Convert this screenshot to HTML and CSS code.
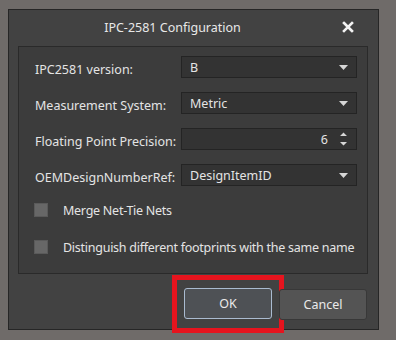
FILE: index.html
```
<!DOCTYPE html>
<html>
<head>
<meta charset="utf-8">
<link rel="stylesheet" href="styles.css">
</head>
<body>
<div class="dialog">
  <div class="titlebar">
    <span class="title">IPC-2581 Configuration</span>
    <svg class="close" width="12" height="12" viewBox="0 0 12 12"><path d="M2 2 L10 10 M10 2 L2 10" stroke="#f2f2f2" stroke-width="2.6" stroke-linecap="square"/></svg>
  </div>
  <div class="group">
    <div class="row">
      <span class="label">IPC2581 version:</span>
      <div class="field combo"><span>B</span><svg class="arrow" width="9" height="5" viewBox="0 0 9 5"><path d="M0 0 H9 L4.5 5 Z" fill="#d6d6d6"/></svg></div>
    </div>
    <div class="row">
      <span class="label">Measurement System:</span>
      <div class="field combo"><span>Metric</span><svg class="arrow" width="9" height="5" viewBox="0 0 9 5"><path d="M0 0 H9 L4.5 5 Z" fill="#d6d6d6"/></svg></div>
    </div>
    <div class="row">
      <span class="label">Floating Point Precision:</span>
      <div class="field spin"><span class="num">6</span><svg class="spinarrows" width="9" height="14" viewBox="0 0 9 14"><path d="M1 4 L4.5 0.5 L8 4 Z M1 10 L4.5 13.5 L8 10 Z" fill="#d6d6d6"/></svg></div>
    </div>
    <div class="row">
      <span class="label">OEMDesignNumberRef:</span>
      <div class="field combo"><span>DesignItemID</span><svg class="arrow" width="9" height="5" viewBox="0 0 9 5"><path d="M0 0 H9 L4.5 5 Z" fill="#d6d6d6"/></svg></div>
    </div>
    <div class="check first"><span class="box"></span><span class="ctext">Merge Net-Tie Nets</span></div>
    <div class="check"><span class="box"></span><span class="ctext">Distinguish different footprints with the same name</span></div>
  </div>
  <div class="buttons">
    <div class="okwrap"><button class="btn ok">OK</button></div>
    <button class="btn cancel">Cancel</button>
  </div>
</div>
</body>
</html>
```
FILE: styles.css
```
html, body {
  margin: 0;
  padding: 0;
  background: #6f6b69;
  width: 396px;
  height: 340px;
  overflow: hidden;
  font-family: "Noto Sans", "Open Sans", sans-serif;
  font-size: 12px;
  color: #e4e4e4;
}
.dialog {
  margin: 9px 0 0 8px;
  width: 369px;
  height: 319px;
  background: #424242;
  border: 1px solid #262626;
  display: flex;
  flex-direction: column;
}
.titlebar {
  height: 36px;
  flex: none;
  position: relative;
  display: flex;
  align-items: center;
  justify-content: center;
  padding-right: 42px;
}
.title {
  font-size: 12.5px;
  color: #e8e8e8;
  margin-top: -1px;
}
.close {
  position: absolute;
  right: 24px;
  top: 11px;
}
.group {
  margin: 0 10px 0 9px;
  height: 228px;
  flex: none;
  background: #3c3c3c;
  border: 1px solid #2a2a2a;
  padding: 9px 9px 0 16px;
  box-sizing: border-box;
  display: flex;
  flex-direction: column;
}
.row {
  display: flex;
  align-items: center;
  height: 22px;
  margin-bottom: 14px;
}
.label {
  width: 146px;
  font-size: 12.5px;
  padding-top: 4px;
  white-space: nowrap;
}
.field {
  width: 176px;
  height: 22px;
  box-sizing: border-box;
  background: #333333;
  border: 1px solid #242424;
  display: flex;
  align-items: center;
  font-size: 12.5px;
  position: relative;
}
.combo {
  padding-left: 8px;
}
.arrow {
  position: absolute;
  right: 8px;
  top: 8px;
}
.spin {
  justify-content: flex-end;
  padding-right: 28px;
}
.spinarrows {
  position: absolute;
  right: 8px;
  top: 3px;
}
.check {
  display: flex;
  align-items: center;
  height: 16px;
  font-size: 12.5px;
  margin-left: -1px;
}
.ctext {
  white-space: nowrap;
  letter-spacing: -0.26px;
}
.check.first {
  margin-top: 2px;
  margin-bottom: 21px;
}
.box {
  width: 14px;
  height: 14px;
  background: #676767;
  border: 1px solid #5a5a5a;
  box-sizing: border-box;
  margin-right: 15px;
  flex: none;
}
.buttons {
  flex: none;
  display: flex;
  justify-content: flex-end;
  align-items: center;
  padding-right: 11px;
  margin-top: 1px;
}
.okwrap {
  border: 5px solid #e6141e;
  padding: 8px 7px 9px 7px;
  margin-right: -5px;
}
.btn {
  font-family: inherit;
  font-size: 12.5px;
  color: #eaeaea;
  width: 88px;
  height: 31px;
  border-radius: 3px;
  padding: 0;
}
.ok {
  background: #4e5155;
  border: 1px solid #aabbd0;
}
.cancel {
  background: #545454;
  border: 1px solid #383838;
}
```
